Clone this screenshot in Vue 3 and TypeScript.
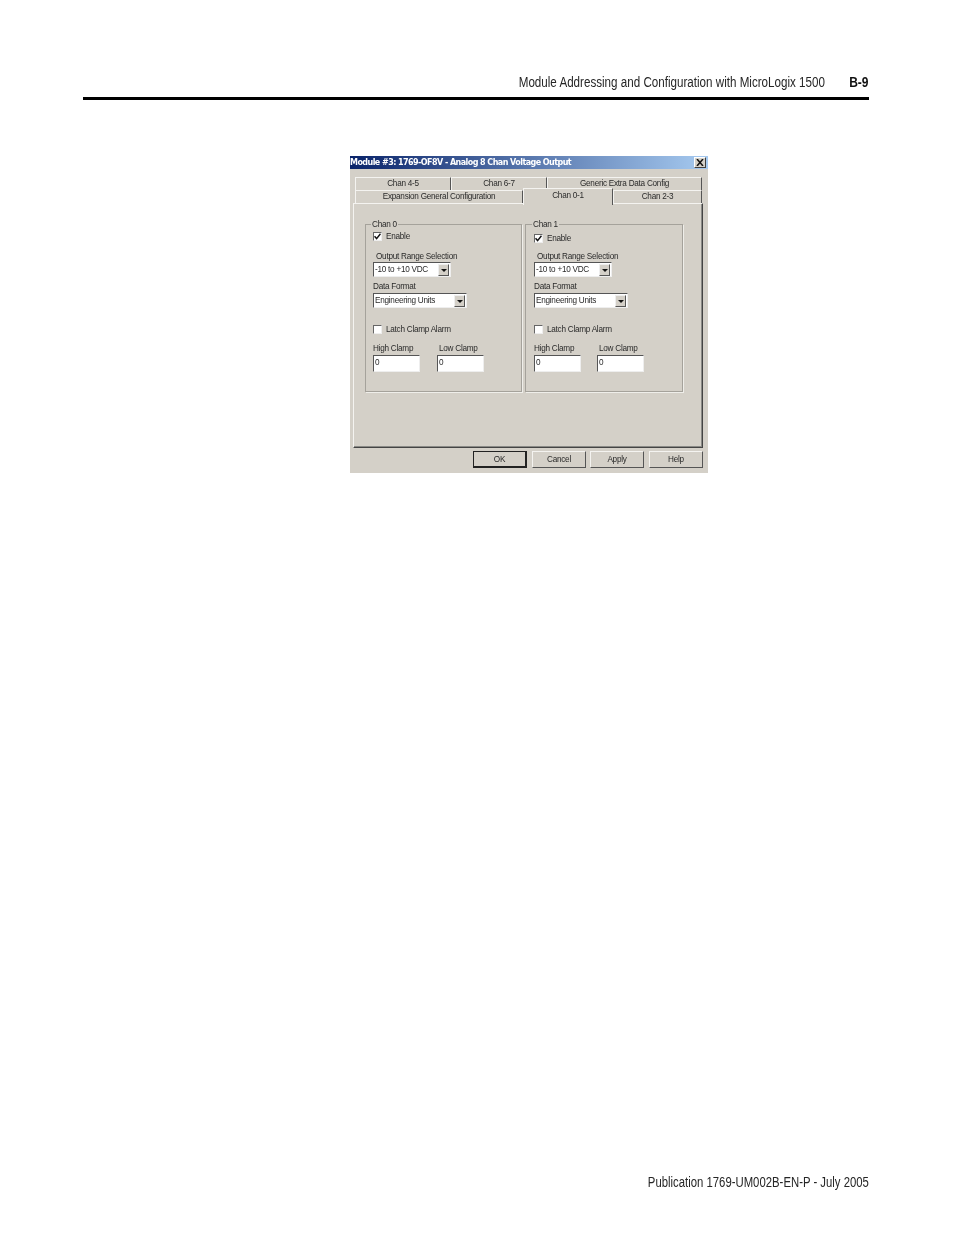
<script setup lang="ts">
interface Channel { name: string; shifted: boolean }
const channels: Channel[] = [
  { name: 'Chan 0', shifted: false },
  { name: 'Chan 1', shifted: true },
]
const topTabs = ['Chan 4-5', 'Chan 6-7', 'Generic Extra Data Config']
const lowerTabs = ['Expansion General Configuration', 'Chan 0-1', 'Chan 2-3']
const buttons = ['OK', 'Cancel', 'Apply', 'Help']
</script>

<template>
  <div class="page">
    <header class="head">
      <span class="head-title">Module Addressing and Configuration with MicroLogix 1500</span>
      <b class="head-num">B-9</b>
    </header>
    <div class="rule"></div>

    <section class="dialog">
      <div class="titlebar">
        <span class="title">Module #3: 1769-OF8V - Analog 8 Chan Voltage Output</span>
        <span class="close">
          <svg width="8" height="7" viewBox="0 0 8 7"><path d="M1 0L7 7M7 0L1 7" stroke="#111" stroke-width="1.5" fill="none" /></svg>
        </span>
      </div>

      <div class="tabs">
        <div class="tab-row top">
          <div v-for="t in topTabs" :key="t" class="tab">{{ t }}</div>
        </div>
        <div class="tab-row lower">
          <div v-for="(t, i) in lowerTabs" :key="t" class="tab" :class="{ active: i === 1 }">{{ t }}</div>
        </div>
      </div>

      <div class="panel">
        <div class="groups">
          <div v-for="c in channels" :key="c.name" class="group" :class="{ second: c.shifted }">
            <span class="legend">{{ c.name }}</span>
            <label class="check enable">
              <span class="box">
                <svg width="7" height="7" viewBox="0 0 7 7"><path d="M0.5 3.2L2.6 5.6L6.5 0.8" stroke="#111" stroke-width="1.5" fill="none" /></svg>
              </span>
              Enable
            </label>
            <div class="label range-label">Output Range Selection</div>
            <div class="select small">
              <span class="value">-10 to +10 VDC</span>
              <span class="arrow"></span>
            </div>
            <div class="label format-label">Data Format</div>
            <div class="select wide">
              <span class="value">Engineering Units</span>
              <span class="arrow"></span>
            </div>
            <label class="check latch">
              <span class="box"></span>
              Latch Clamp Alarm
            </label>
            <div class="clamps">
              <div class="clamp">
                <div class="label">High Clamp</div>
                <div class="input">0</div>
              </div>
              <div class="clamp low">
                <div class="label">Low Clamp</div>
                <div class="input">0</div>
              </div>
            </div>
          </div>
        </div>
      </div>

      <div class="buttons">
        <div v-for="(b, i) in buttons" :key="b" class="btn" :class="{ primary: i === 0 }">{{ b }}</div>
      </div>
    </section>

    <footer class="foot"><span class="foot-text">Publication 1769-UM002B-EN-P - July 2005</span></footer>
  </div>
</template>

<style>
html, body { margin: 0; background: #fff; }
</style>

<style scoped>
.page {
  width: 954px;
  height: 1235px;
  display: flex;
  flex-direction: column;
  background: #fff;
  color: #262626;
  font-family: "Liberation Sans", sans-serif;
  overflow: hidden;
}
.head {
  display: flex;
  justify-content: flex-end;
  align-items: baseline;
  padding: 73px 85px 0 0;
  height: 24px;
  font-size: 14px;
  line-height: 18px;
}
.head-title {
  display: inline-block;
  white-space: nowrap;
  transform: scaleX(0.83);
  transform-origin: right center;
  margin-right: 22px;
}
.head-num {
  display: inline-block;
  color: #111;
  transform: scaleX(0.86);
  transform-origin: right center;
}
.rule { height: 3px; margin: 0 85px 0 83px; background: #000; }

.dialog {
  width: 358px;
  height: 317px;
  margin: 56px 0 0 350px;
  background: #d4d0c8;
  color: #2a2a2a;
  font-family: "Liberation Sans", Arial, sans-serif;
  font-size: 8.2px;
  letter-spacing: -0.26px;
  line-height: 11px;
  display: flex;
  flex-direction: column;
  filter: blur(0.35px);
}
.titlebar {
  height: 13px;
  flex: none;
  background: linear-gradient(90deg, #0a246a, #a6caf0);
  display: flex;
  align-items: center;
  justify-content: space-between;
  padding-right: 2px;
}
.title {
  color: #fff;
  font-family: "DejaVu Sans", sans-serif;
  font-weight: 700;
  font-size: 8px;
  letter-spacing: -0.55px;
  white-space: nowrap;
}
.close {
  width: 12px;
  height: 11px;
  box-sizing: border-box;
  background: #d4d0c8;
  border: 1px solid;
  border-color: #fff #404040 #404040 #fff;
  display: flex;
  align-items: center;
  justify-content: center;
}

.tabs { margin: 8px 5px 0; height: 26px; flex: none; position: relative; z-index: 1; }
.tab-row { display: flex; height: 13px; }
.tab {
  box-sizing: border-box;
  text-align: center;
  border-top: 1px solid #f4f3f0;
  border-left: 1px solid #f4f3f0;
  border-right: 1px solid #555;
  white-space: nowrap;
  line-height: 12px;
}
.top .tab:nth-child(1), .top .tab:nth-child(2) { width: 96px; }
.top .tab:nth-child(3) { width: 155px; }
.lower .tab:nth-child(1) { width: 168px; }
.lower .tab:nth-child(2) { width: 90px; }
.lower .tab:nth-child(3) { width: 89px; }
.tab.active {
  height: 17px;
  margin-top: -2px;
  background: #d4d0c8;
  position: relative;
  line-height: 13px;
}

.panel {
  box-sizing: border-box;
  height: 245px;
  margin: 0 5px 0 3px;
  flex: none;
  border: 1px solid;
  border-color: #f4f3f0 #444 #444 #f4f3f0;
  box-shadow: inset -1px -1px 0 #8a8a86;
  padding: 20px 0 0 11px;
}
.groups { display: flex; gap: 3px; }
.group {
  box-sizing: border-box;
  width: 157px;
  height: 168px;
  border: 1px solid #a5a29b;
  box-shadow: 1px 1px 0 #efeeea;
  padding: 0 0 0 7px;
  display: flex;
  flex-direction: column;
  align-items: flex-start;
}
.group.second { width: 158px; padding-left: 8px; }
.legend {
  background: #d4d0c8;
  margin: -6px 0 0 -2px;
  padding: 0 1px;
  height: 11px;
}
.check { display: flex; align-items: center; gap: 4px; height: 11px; }
.enable { margin-top: 1px; }
.second .enable { margin-top: 3px; }
.box {
  box-sizing: border-box;
  width: 9px;
  height: 9px;
  background: #fff;
  border: 1px solid;
  border-color: #666 #eee #eee #666;
  display: flex;
  align-items: center;
  justify-content: center;
}
.box svg { flex: none; }
.label { height: 11px; white-space: nowrap; }
.range-label { margin: 9px 0 0 3px; }
.second .range-label { margin-top: 7px; }
.select {
  box-sizing: border-box;
  height: 15px;
  background: #fff;
  border: 1px solid;
  border-color: #555 #eee #eee #555;
  display: flex;
  align-items: center;
  justify-content: space-between;
  padding: 0 1px 0 1px;
}
.select.small { width: 78px; }
.select.wide { width: 94px; }
.arrow {
  box-sizing: border-box;
  width: 11px;
  height: 12px;
  background: #d4d0c8;
  border: 1px solid;
  border-color: #eee #555 #555 #eee;
  position: relative;
}
.arrow::after {
  content: "";
  position: absolute;
  left: 2px;
  top: 4px;
  border: 3px solid transparent;
  border-top: 3px solid #111;
  border-bottom: 0;
}
.format-label { margin-top: 4px; }
.select.wide { margin-top: 1px; }
.latch { margin-top: 16px; }
.clamps { display: flex; margin-top: 8px; }
.clamp { width: 64px; }
.second .clamp { width: 63px; }
.clamp.low .label { margin-left: 2px; }
.input {
  box-sizing: border-box;
  width: 47px;
  height: 17px;
  margin-top: 1px;
  background: #fff;
  border: 1px solid;
  border-color: #555 #eee #eee #555;
  padding: 1px 0 0 1px;
}

.buttons {
  display: flex;
  justify-content: flex-end;
  gap: 5px;
  margin: 3px 5px 0 0;
}
.btn {
  box-sizing: border-box;
  width: 54px;
  height: 17px;
  text-align: center;
  line-height: 15px;
  border: 1px solid;
  border-color: #f4f3f0 #555 #555 #f4f3f0;
}
.btn:nth-child(2) { margin-right: -1px; }
.btn.primary { border: 1px solid #222; border-width: 1px 2px 2px 1px; }

.foot {
  margin-top: auto;
  padding: 0 85px 44px 0;
  text-align: right;
  font-size: 14px;
  line-height: 18px;
}
.foot-text {
  display: inline-block;
  white-space: nowrap;
  transform: scaleX(0.81);
  transform-origin: right center;
}
</style>
